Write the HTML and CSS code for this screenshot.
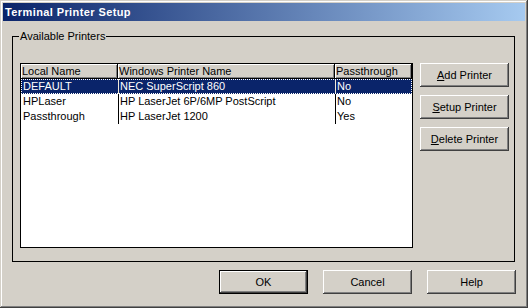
FILE: index.html
```html
<!DOCTYPE html>
<html>
<head>
<meta charset="utf-8">
<link rel="stylesheet" href="styles.css">
</head>
<body>
<div class="window">
  <div class="titlebar">Terminal Printer Setup</div>
  <div class="content">
    <fieldset class="group">
      <legend class="group-label">Available Printers</legend>
      <div class="group-inner">
        <div class="list">
          <div class="row head">
            <div class="cell c1">Local Name</div>
            <div class="cell c2">Windows Printer Name</div>
            <div class="cell c3">Passthrough</div>
          </div>
          <div class="row data sel">
            <div class="cell c1">DEFAULT</div>
            <div class="cell c2">NEC SuperScript 860</div>
            <div class="cell c3">No</div>
          </div>
          <div class="row data">
            <div class="cell c1">HPLaser</div>
            <div class="cell c2">HP LaserJet 6P/6MP PostScript</div>
            <div class="cell c3">No</div>
          </div>
          <div class="row data">
            <div class="cell c1">Passthrough</div>
            <div class="cell c2">HP LaserJet 1200</div>
            <div class="cell c3">Yes</div>
          </div>
        </div>
        <div class="side">
          <button class="btn btn-add"><u>A</u>dd Printer</button>
          <button class="btn"><u>S</u>etup Printer</button>
          <button class="btn"><u>D</u>elete Printer</button>
        </div>
      </div>
    </fieldset>
    <div class="footer">
      <button class="btn btn-default">OK</button>
      <button class="btn">Cancel</button>
      <button class="btn">Help</button>
    </div>
  </div>
</div>
</body>
</html>
```
FILE: styles.css
```css
html, body {
  margin: 0;
  padding: 0;
  background: #d4d0c8;
}
body {
  width: 528px;
  height: 308px;
  font-family: "Liberation Sans", Arial, sans-serif;
  font-size: 11px;
  color: #000;
}
.window {
  box-sizing: border-box;
  width: 528px;
  height: 308px;
  background: #d4d0c8;
  padding: 3px;
  box-shadow: inset -1px -1px #404040, inset 1px 1px #d4d0c8, inset -2px -2px #808080, inset 2px 2px #fff;
  display: flex;
  flex-direction: column;
}
.titlebar {
  height: 18px;
  line-height: 18px;
  padding-left: 2px;
  color: #fff;
  font-weight: bold;
  font-size: 11px;
  letter-spacing: 0.4px;
  background: linear-gradient(to right, #0a246a, #a6caf0);
  white-space: nowrap;
}
.content {
  display: flex;
  flex-direction: column;
}
.group {
  margin: 9px 0 0 9px;
  width: 503px;
  box-sizing: border-box;
  border: 1px solid #000;
  padding: 20px 7px 13px 7px;
  min-width: 0;
}
.group-label {
  margin-left: -1px;
  padding: 0 1px;
  line-height: 13px;
  font-size: 11px;
}
.group-inner {
  display: flex;
  gap: 7px;
}
.list {
  box-sizing: border-box;
  width: 393px;
  height: 185px;
  border: 1px solid #000;
  background: #fff;
}
.row {
  display: grid;
  grid-template-columns: 97px 217px 77px;
}
.cell {
  white-space: nowrap;
  overflow: hidden;
  box-sizing: border-box;
}
.head .cell {
  height: 15px;
  line-height: 14px;
  padding-left: 1px;
  background: #d4d0c8;
  box-shadow: inset -1px -1px #000, inset 1px 1px #fff, inset -2px -2px #808080;
}
.data .cell {
  height: 15px;
  line-height: 15px;
}
.data .c1 {
  padding-left: 2px;
}
.data .c2, .data .c3 {
  border-left: 1px solid #000;
  padding-left: 1px;
}
.sel {
  background: #0a246a;
  color: #fff;
  outline: 1px dotted #fff;
  outline-offset: -1px;
}
.sel .c2, .sel .c3 {
  border-left-color: #f0e8d8;
}
.side {
  display: flex;
  flex-direction: column;
  gap: 8px;
}
.btn {
  box-sizing: border-box;
  width: 89px;
  height: 24px;
  margin: 0;
  padding: 0;
  border: 0;
  background: #d4d0c8;
  font-family: "Liberation Sans", Arial, sans-serif;
  font-size: 11px;
  color: #000;
  box-shadow: inset -1px -1px #404040, inset 1px 1px #fff, inset -2px -2px #808080, inset 2px 2px #d4d0c8;
}
.btn u {
  text-decoration: underline;
}
.btn-default {
  box-shadow: inset 0 0 0 1px #000, inset -2px -2px #404040, inset 2px 2px #fff, inset -3px -3px #808080;
}
.footer {
  display: flex;
  justify-content: flex-end;
  gap: 15px;
  margin-top: 8px;
  padding-right: 9px;
}
```
